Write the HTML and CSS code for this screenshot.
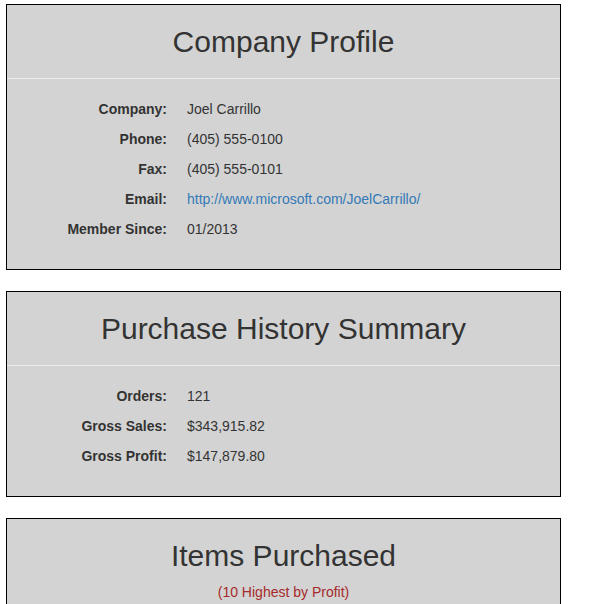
FILE: index.html
```html
<!DOCTYPE html>
<html lang="en">
<head>
<meta charset="utf-8">
<title>Customer</title>
<link rel="stylesheet" href="styles.css">
</head>
<body>
<div class="page">
  <section class="panel">
    <header class="panel-head">
      <h2 class="panel-title">Company Profile</h2>
    </header>
    <dl class="panel-body details">
      <dt>Company:</dt><dd>Joel Carrillo</dd>
      <dt>Phone:</dt><dd>(405) 555-0100</dd>
      <dt>Fax:</dt><dd>(405) 555-0101</dd>
      <dt>Email:</dt><dd><a class="link" href="#">http://www.microsoft.com/JoelCarrillo/</a></dd>
      <dt>Member Since:</dt><dd>01/2013</dd>
    </dl>
  </section>

  <section class="panel">
    <header class="panel-head">
      <h2 class="panel-title">Purchase History Summary</h2>
    </header>
    <dl class="panel-body details">
      <dt>Orders:</dt><dd>121</dd>
      <dt>Gross Sales:</dt><dd>$343,915.82</dd>
      <dt>Gross Profit:</dt><dd>$147,879.80</dd>
    </dl>
  </section>

  <section class="panel">
    <header class="panel-head panel-head-sub">
      <h2 class="panel-title">Items Purchased</h2>
      <p class="subtitle">(10 Highest by Profit)</p>
    </header>
    <div class="panel-body">
      <p class="placeholder">&nbsp;</p>
    </div>
  </section>
</div>
</body>
</html>
```

FILE: styles.css
```css
html, body {
  margin: 0;
  padding: 0;
  overflow: hidden;
  background: #fff;
}

body {
  font-family: "Liberation Sans", Arial, sans-serif;
  font-size: 14px;
  line-height: 20px;
  color: #333;
}

.page {
  padding: 4px 0 0 6px;
}

.panel {
  width: 553px;
  border: 1px solid #000;
  background: #d3d3d3;
  margin-bottom: 21px;
}

.panel-head {
  padding: 20px 0 10px;
  border-bottom: 1px solid #ececec;
  text-align: center;
}

.panel-title {
  margin: 0 0 10px;
  font-size: 30px;
  line-height: 33px;
  font-weight: normal;
  color: #333;
}

.subtitle {
  margin: 0;
  color: #a52a2a;
  font-size: 14px;
  line-height: 20px;
}

.panel-body {
  margin: 0;
  padding: 20px 0 30px;
}

.details {
  display: grid;
  grid-template-columns: 160px 1fr;
  column-gap: 20px;
  row-gap: 10px;
}

.details dt {
  font-weight: bold;
  text-align: right;
}

.details dd {
  margin: 0;
}

.link {
  color: #337ab7;
  text-decoration: none;
}

.placeholder {
  margin: 0;
  height: 200px;
}
```
